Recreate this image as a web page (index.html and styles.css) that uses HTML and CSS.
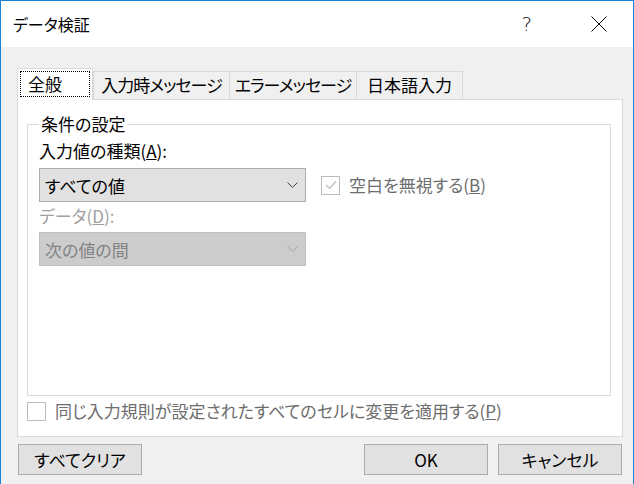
FILE: index.html
```html
<!DOCTYPE html>
<html lang="ja">
<head>
    <meta charset="UTF-8">
    <title>データ検証</title>
    <link rel="stylesheet" href="styles.css">
</head>
<body>
    <div class="window">
        <header class="titlebar">
            <span class="title">データ検証</span>
            <span class="help">?</span>
            <svg class="close" width="16" height="16" viewBox="0 0 16 16">
                <path d="M0.5 0.5 L15.5 15.5 M15.5 0.5 L0.5 15.5" stroke="#000" stroke-width="1" fill="none"/>
            </svg>
        </header>

        <main class="content">
            <div class="tabs">
                <div class="tab active"><span class="focus">全般</span></div>
                <div class="tab tab-input">入力時メッセージ</div>
                <div class="tab tab-error">エラーメッセージ</div>
                <div class="tab tab-ime">日本語入力</div>
            </div>

            <section class="panel">
                <fieldset class="group">
                    <legend>条件の設定</legend>
                    <div class="label">入力値の種類(<u>A</u>):</div>
                    <div class="row">
                        <div class="combo">
                            <span>すべての値</span>
                            <svg class="chevron" width="11" height="7" viewBox="0 0 11 7">
                                <path d="M0.5 0.5 L5.5 5.5 L10.5 0.5" stroke="#404040" fill="none"/>
                            </svg>
                        </div>
                        <div class="check ignore-blank">
                            <span class="box">
                                <svg width="16" height="16" viewBox="0 0 16 16">
                                    <path d="M3 8 L6.5 11.5 L13 4.5" stroke="#bcbcbc" stroke-width="1.2" fill="none"/>
                                </svg>
                            </span>
                            <span>空白を無視する(<u>B</u>)</span>
                        </div>
                    </div>
                    <div class="label disabled">データ(<u>D</u>):</div>
                    <div class="combo disabled">
                        <span>次の値の間</span>
                        <svg class="chevron" width="11" height="7" viewBox="0 0 11 7">
                            <path d="M0.5 0.5 L5.5 5.5 L10.5 0.5" stroke="#a6a6a6" fill="none"/>
                        </svg>
                    </div>
                </fieldset>

                <div class="check apply-all">
                    <span class="box"></span>
                    <span>同じ入力規則が設定されたすべてのセルに変更を適用する(<u>P</u>)</span>
                </div>
            </section>

            <div class="buttons">
                <button class="btn">すべてクリア</button>
                <span class="spacer"></span>
                <button class="btn">OK</button>
                <button class="btn">キャンセル</button>
            </div>
        </main>
    </div>
</body>
</html>
```

FILE: styles.css
```css
* {
    box-sizing: border-box;
}

body {
    margin: 0;
    font-family: "Noto Sans CJK JP", "Noto Sans", sans-serif;
    font-feature-settings: "palt";
    font-size: 17px;
    color: #000;
    background: #f0f0f0;
}

.window {
    width: 634px;
    height: 484px;
    border: 1px solid #1883d7;
    border-bottom: none;
    background: #f0f0f0;
    overflow: hidden;
}

/* Title bar */
.titlebar {
    height: 46px;
    background: #fff;
    display: flex;
    align-items: center;
    padding: 0 26px 0 12px;
}

.title {
    font-size: 16px;
    line-height: 46px;
}

.help {
    margin-left: auto;
    margin-right: 59px;
    font-family: "DejaVu Sans", sans-serif;
    font-weight: 200;
    font-size: 20px;
    line-height: 20px;
    color: #111;
}

.close {
    display: block;
}

/* Tabs */
.content {
    padding: 21px 10px 0 16px;
}

.tabs {
    display: flex;
    align-items: flex-end;
    height: 31px;
}

.tab {
    height: 28px;
    border: 1px solid #d9d9d9;
    border-bottom: none;
    background: #f0f0f0;
    display: flex;
    align-items: center;
    justify-content: center;
    line-height: 20px;
    padding-bottom: 1px;
}

.tab.active {
    position: relative;
    z-index: 1;
    width: 76px;
    height: 32px;
    margin-bottom: -1px;
    background: #fff;
    padding: 2px 2px 3px;
    align-items: stretch;
    justify-content: flex-start;
}

.focus {
    flex: 1;
    border: 1px dotted #000;
    padding-left: 7px;
    display: flex;
    align-items: center;
}

.tab-input {
    width: 137px;
    letter-spacing: -1px;
}

.tab-error {
    width: 128px;
    margin-left: -1px;
    letter-spacing: -1px;
}

.tab-ime {
    width: 107px;
    margin-left: -1px;
}

/* Panel */
.panel {
    width: 606px;
    height: 338px;
    border: 1px solid #d9d9d9;
    background: #fff;
}

.group {
    margin: 14px 11px 0 9px;
    padding: 0 11px 129px;
    border: 1px solid #dcdcdc;
    min-width: 0;
}

.group legend {
    padding: 0 2px;
    line-height: 20px;
}

.label {
    line-height: 20px;
    margin-top: 7px;
}

.label.disabled {
    margin-top: 4px;
    color: #a0a0a0;
}

.row {
    display: flex;
    align-items: center;
    margin-top: 7px;
}

.combo {
    width: 267px;
    height: 34px;
    border: 1px solid #adadad;
    background: #e1e1e1;
    display: flex;
    align-items: center;
    justify-content: space-between;
    padding: 0 7px 0 5px;
}

.combo.disabled {
    margin-top: 6px;
    border-color: #bfbfbf;
    background: #cccccc;
    color: #838383;
}

.chevron {
    display: block;
}

.check {
    display: flex;
    align-items: center;
    gap: 9px;
    color: #6d6d6d;
    line-height: 20px;
}

.box {
    width: 19px;
    height: 19px;
    border: 1px solid #bcbcbc;
    background: #fff;
    display: flex;
    align-items: center;
    justify-content: center;
}

.ignore-blank {
    margin-left: 15px;
}

.apply-all {
    margin: 5px 0 0 9px;
}

/* Buttons */
.buttons {
    display: flex;
    gap: 10px;
    margin-top: 7px;
    padding: 0 1px;
}

.spacer {
    flex: 1;
}

.btn {
    width: 124px;
    height: 31px;
    border: 1px solid #adadad;
    background: #e1e1e1;
    font: inherit;
    font-size: 17px;
    line-height: 20px;
    color: #000;
    padding: 0;
}
```
